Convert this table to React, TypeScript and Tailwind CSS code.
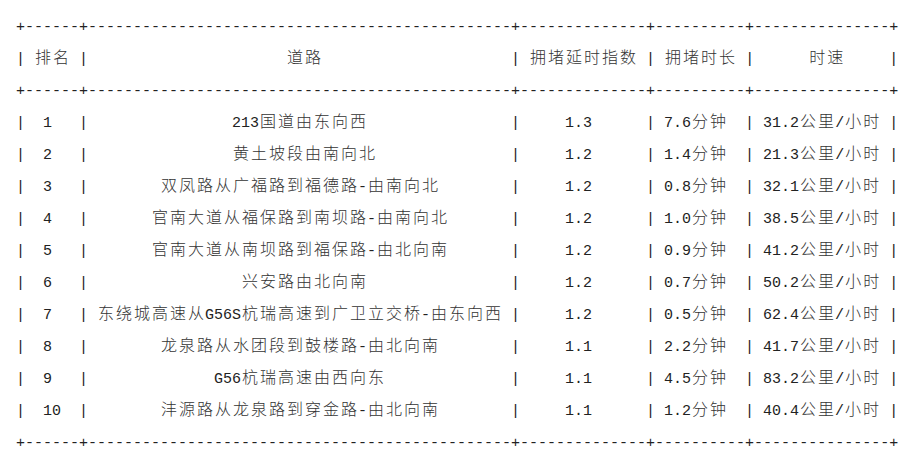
const headers = ["排名", "道路", "拥堵延时指数", "拥堵时长", "时速"];

const rows: string[][] = [
  ["1", "213国道由东向西", "1.3", "7.6分钟", "31.2公里/小时"],
  ["2", "黄土坡段由南向北", "1.2", "1.4分钟", "21.3公里/小时"],
  ["3", "双凤路从广福路到福德路-由南向北", "1.2", "0.8分钟", "32.1公里/小时"],
  ["4", "官南大道从福保路到南坝路-由南向北", "1.2", "1.0分钟", "38.5公里/小时"],
  ["5", "官南大道从南坝路到福保路-由北向南", "1.2", "0.9分钟", "41.2公里/小时"],
  ["6", "兴安路由北向南", "1.2", "0.7分钟", "50.2公里/小时"],
  ["7", "东绕城高速从G56S杭瑞高速到广卫立交桥-由东向西", "1.2", "0.5分钟", "62.4公里/小时"],
  ["8", "龙泉路从水团段到鼓楼路-由北向南", "1.1", "2.2分钟", "41.7公里/小时"],
  ["9", "G56杭瑞高速由西向东", "1.1", "4.5分钟", "83.2公里/小时"],
  ["10", "沣源路从龙泉路到穿金路-由北向南", "1.1", "1.2分钟", "40.4公里/小时"],
];

const isWide = (ch: string) => ch.charCodeAt(0) > 0x2e80;

const textWidth = (s: string) =>
  Array.from(s).reduce((n, ch) => n + (isWide(ch) ? 2 : 1), 0);

// centre like prettytable does
function center(text: string, width: number) {
  const excess = width - textWidth(text);
  const half = Math.floor(excess / 2);
  if (excess % 2) {
    return textWidth(text) % 2
      ? " ".repeat(half) + text + " ".repeat(half + 1)
      : " ".repeat(half + 1) + text + " ".repeat(half);
  }
  return " ".repeat(half) + text + " ".repeat(half);
}

const widths = headers.map((h, i) =>
  Math.max(textWidth(h), ...rows.map((r) => textWidth(r[i])))
);

const border = "+" + widths.map((w) => "-".repeat(w + 2)).join("+") + "+";
const line = (cells: string[]) =>
  "|" + cells.map((c, i) => " " + center(c, widths[i]) + " ").join("|") + "|";

function Mono({ text }: { text: string }) {
  const parts: { wide: boolean; s: string }[] = [];
  for (const ch of Array.from(text)) {
    const last = parts[parts.length - 1];
    if (isWide(ch)) parts.push({ wide: true, s: ch });
    else if (last && !last.wide) last.s += ch;
    else parts.push({ wide: false, s: ch });
  }
  return (
    <div className="h-[32px] leading-[32px] whitespace-pre">
      {parts.map((p, i) =>
        p.wide ? (
          <span
            key={i}
            className="inline-block w-[18px] text-center font-['Noto_Sans_CJK_SC',sans-serif] font-light text-[16px] text-[#333]"
          >
            {p.s}
          </span>
        ) : (
          <span key={i}>{p.s}</span>
        )
      )}
    </div>
  );
}

function Border() {
  return (
    <div className="h-[32px] pt-[4px] leading-[32px] whitespace-pre">
      {border}
    </div>
  );
}

export default function App() {
  return (
    <div className="w-[914px] h-[464px] bg-white pt-[8px] pl-[16px] text-[#222] font-['Liberation_Mono',monospace] text-[15px]">
      <Border />
      <Mono text={line(headers)} />
      <Border />
      {rows.map((r, i) => (
        <Mono key={i} text={line(r)} />
      ))}
      <Border />
    </div>
  );
}
